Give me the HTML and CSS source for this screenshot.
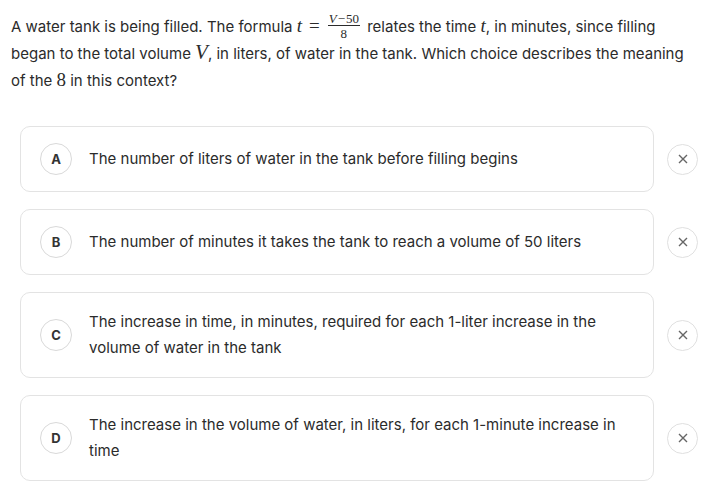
FILE: index.html
```html
<!DOCTYPE html>
<html lang="en">

<head>
    <meta charset="UTF-8">
    <meta name="viewport" content="width=device-width, initial-scale=1.0">
    <title>Question</title>
    <link rel="stylesheet" href="styles.css">
</head>

<body>
    <div class="question">
        <p class="prompt">
            A water tank is being filled. The formula
            <span class="math"><i>t</i><span class="op">=</span><span class="frac"><span class="num"><i>V</i><span class="minus">&minus;</span>50</span><span class="den">8</span></span></span>
            relates the time <span class="math"><i>t</i></span>, in minutes, since filling began to the total volume
            <span class="math big"><i>V</i></span>, in liters, of water in the tank. Which choice describes the meaning
            of the <span class="math">8</span> in this context?
        </p>

        <div class="choices">
            <div class="choice-row">
                <div class="choice">
                    <span class="letter">A</span>
                    <span class="choice-text">The number of liters of water in the tank before filling begins</span>
                </div>
                <button class="strike">
                    <svg width="12" height="12" viewBox="0 0 12 12"><path d="M2 2 L10 10 M10 2 L2 10" /></svg>
                </button>
            </div>

            <div class="choice-row">
                <div class="choice">
                    <span class="letter">B</span>
                    <span class="choice-text">The number of minutes it takes the tank to reach a volume of 50 liters</span>
                </div>
                <button class="strike">
                    <svg width="12" height="12" viewBox="0 0 12 12"><path d="M2 2 L10 10 M10 2 L2 10" /></svg>
                </button>
            </div>

            <div class="choice-row">
                <div class="choice">
                    <span class="letter">C</span>
                    <span class="choice-text">The increase in time, in minutes, required for each 1-liter increase in the volume of water in the tank</span>
                </div>
                <button class="strike">
                    <svg width="12" height="12" viewBox="0 0 12 12"><path d="M2 2 L10 10 M10 2 L2 10" /></svg>
                </button>
            </div>

            <div class="choice-row">
                <div class="choice">
                    <span class="letter">D</span>
                    <span class="choice-text">The increase in the volume of water, in liters, for each 1-minute increase in time</span>
                </div>
                <button class="strike">
                    <svg width="12" height="12" viewBox="0 0 12 12"><path d="M2 2 L10 10 M10 2 L2 10" /></svg>
                </button>
            </div>
        </div>
    </div>
</body>

</html>
```

FILE: styles.css
```css
body {
    margin: 0;
    background: #fff;
    font-family: Inter, "Noto Sans", sans-serif;
    color: #2b2b2b;
}

.question {
    padding: 13px 22px 0 11px;
}

.prompt {
    margin: 0;
    font-size: 15px;
    line-height: 27px;
}

/* inline math */
.math {
    font-family: "Liberation Serif", "DejaVu Serif", serif;
    font-size: 19px;
    line-height: 0;
}

.math.big {
    font-size: 21px;
}

.math .op {
    margin: 0 6px 0 7px;
}

.frac {
    display: inline-block;
    vertical-align: middle;
    text-align: center;
    font-size: 13px;
    line-height: 11px;
    margin: -4px 3px 0 2px;
}

.frac .num,
.frac .den {
    display: block;
}

.frac .num {
    border-bottom: 1px solid #2b2b2b;
    padding: 0 1px 1px;
}

.frac .minus {
    margin: 0 1px;
}

.frac .den {
    padding-top: 2px;
}

.choices {
    display: flex;
    flex-direction: column;
    gap: 17px;
    margin: 32px 0 0 9px;
}

.choice-row {
    display: flex;
    align-items: center;
    gap: 13px;
}

.choice {
    flex: 1;
    display: flex;
    align-items: center;
    gap: 17px;
    padding: 16px 22px 16px 19px;
    border: 1px solid #e3e3e3;
    border-radius: 10px;
}

.letter {
    flex: none;
    width: 32px;
    height: 32px;
    box-sizing: border-box;
    border: 1px solid #d9d9d9;
    border-radius: 50%;
    display: flex;
    align-items: center;
    justify-content: center;
    font-size: 13px;
    font-weight: 700;
    color: #333;
}

.choice-text {
    font-size: 15px;
    line-height: 26px;
}

.strike {
    flex: none;
    width: 31px;
    height: 31px;
    padding: 0;
    border: 1px solid #e0e0e0;
    border-radius: 50%;
    background: #fff;
    display: flex;
    align-items: center;
    justify-content: center;
}

.strike svg path {
    stroke: #666;
    stroke-width: 1.4;
    fill: none;
}
```
